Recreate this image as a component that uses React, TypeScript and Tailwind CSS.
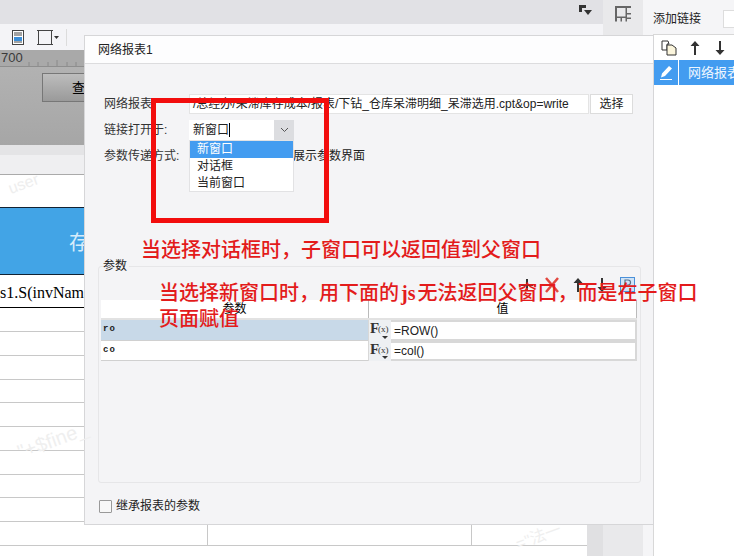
import React from "react";

const FONT = '"Liberation Sans","Noto Sans CJK SC",sans-serif';
const SERIF = '"Liberation Serif","Noto Sans CJK SC",serif';
const ANNOT = '"Liberation Serif","Noto Sans CJK SC",serif';

function Fx() {
  return (
    <div className="w-[23px] relative bg-[#eef0f3] border-l border-[#d8d8d8]" style={{ fontFamily: SERIF }}>
      <span className="absolute left-[1px] top-[0px] text-[15px] font-bold leading-[16px] text-[#333]">F</span>
      <span className="absolute left-[9px] top-[1px] text-[9px] leading-[16px] text-[#333]">(x)</span>
      <span className="absolute right-[3px] bottom-[2px] w-0 h-0 border-x-[3px] border-x-transparent border-t-[3px] border-t-[#333]" />
    </div>
  );
}

function ParamRow({ name, val, selected, h }: { name: string; val: string; selected?: boolean; h: string }) {
  return (
    <div className={`flex ${h}`}>
      <div
        className={`w-[267px] pl-[2px] flex items-center text-[9px] font-bold tracking-[1px] text-[#222] border-b border-[#d0d0d0] ${selected ? "bg-[#c8d9e8]" : "bg-white"}`}
        style={{ fontFamily: '"Liberation Mono",monospace' }}
      >
        {name}
      </div>
      <Fx />
      <div className="flex-1 bg-white border-2 border-[#d8d8d8] border-l-0 pl-[3px] flex items-center text-[12px] text-[#222]">{val}</div>
    </div>
  );
}

const lineYs = [24, 24, 24, 23, 24, 24, 24, 23, 24, 24];

export default function App() {
  return (
    <div className="relative w-[734px] h-[556px] overflow-hidden bg-white flex" style={{ fontFamily: FONT }}>
      {/* Left editor */}
      <div className="w-[603px] flex flex-col shrink-0">
        <div className="h-[24px] bg-[#e1e1e5] flex justify-end items-start pt-[5px] pr-[11px]">
          <svg width="13" height="11" viewBox="0 0 13 11">
            <path d="M0 0h7v3H3v4H0z" fill="#333" />
            <path d="M5 5h8l-4 5z" fill="#333" />
          </svg>
        </div>
        <div className="h-[26px] bg-[#f4f4f7] flex items-center pl-[12px]">
          <svg width="12" height="15" viewBox="0 0 12 15">
            <rect x="0.5" y="0.5" width="11" height="14" fill="#fff" stroke="#444" />
            <path d="M2 3h8M2 5h8M2 12h8" stroke="#444" />
            <rect x="2" y="7" width="8" height="4" fill="#3b8ed8" />
          </svg>
          <svg className="ml-[13px]" width="22" height="17" viewBox="0 0 22 17">
            <rect x="1.5" y="1.5" width="13" height="14" fill="#f4f4f7" stroke="#444" />
            <path d="M0 1.5h3M0 15.5h3M13 1.5h3M13 15.5h3" stroke="#444" />
            <path d="M17 7h5l-2.5 3z" fill="#333" />
          </svg>
          <span className="ml-[7px] w-px h-[17px] bg-[#dcdcdc]" />
        </div>
        <div className="h-[17px] bg-[#a9a9a9] border-b border-[#8e8e8e] text-[13px] text-[#3a3a3a] pl-[1px] leading-[15px] relative">
          700
          <svg className="absolute left-[28px] bottom-0" width="70" height="6" viewBox="0 0 70 6">
            <path d="M1 2v4M10 2v4M20 2v4M29 0v6M39 2v4M48 2v4M58 2v4M67 2v4" stroke="#8a8a8a" />
          </svg>
        </div>
        <div className="h-[78px] bg-gradient-to-b from-[#b2b2b2] to-[#a6a6a6] pl-[42px] pt-[6px]">
          <div className="w-[100px] h-[29px] border border-[#777] bg-gradient-to-b from-[#bdbdbd] to-[#9a9a9a] pl-[29px] text-[13px] leading-[27px] text-black">查</div>
        </div>
        <div className="h-[10px] bg-[#e4e4e6]" />
        <div className="h-[20px] bg-[#efeff1] border-b border-[#aaa]" />
        <div className="h-[32px] bg-white" />
        <div className="h-[68px] bg-[#42a4e6] border-y border-[#123] text-[#d6ecfb] text-[20px] pl-[69px] leading-[70px]">存</div>
        <div className="h-[33px] border-b border-black bg-white text-[16px] leading-[36px] overflow-hidden whitespace-nowrap" style={{ fontFamily: SERIF }}>
          s1.S(invNam
        </div>
        <div className="flex-1 flex">
          <div className="w-[587px] bg-white">
            {lineYs.map((h, i) => (
              <div key={i} style={{ height: h }} className="border-b border-[#c8c8c8] flex">
                <div className="w-[208px] h-full border-r border-[#c8c8c8]" />
                <div className="w-[264px] h-full border-r border-[#c8c8c8]" />
              </div>
            ))}
          </div>
          <div className="flex-1 bg-[#e0e0e2]" />
        </div>
      </div>

      {/* Tool strip */}
      <div className="w-[40px] bg-[#e9e9eb] flex flex-col items-center pt-[5px] shrink-0">
        <svg width="17" height="17" viewBox="0 0 17 17">
          <path d="M0 1h16v2H12v5h4v1.5H12v3h4V14H12v2.5H10.500V13H7v3.500H5.500V13H2v3.500H0zM2 3v8.500h8.500V3z" fill="#666" />
        </svg>
      </div>

      {/* Right panel */}
      <div className="flex-1 bg-[#f5f5f7] flex flex-col min-w-0">
        <div className="h-[34px] flex items-center pl-[10px] pt-[3px] text-[12px] text-[#222] whitespace-nowrap">
          添加链接
          <span className="ml-[22px] w-[20px] h-[18px] bg-white border border-[#ddd] shrink-0" />
        </div>
        <div className="flex-1 flex">
          <div className="w-[10px] shrink-0" />
          <div className="flex-1 min-w-0 bg-white border-l border-[#d8d8d8] border-t flex flex-col">
            <div className="h-[25px] flex items-center pl-[7px] bg-white">
              <svg width="16" height="16" viewBox="0 0 16 16">
                <path d="M1 1h6l1 3H6v6H1z" fill="#fff" stroke="#333" />
                <path d="M6 5h5l4 3v7H6z" fill="#fbf5dc" stroke="#333" />
              </svg>
              <svg className="ml-[13px]" width="10" height="14" viewBox="0 0 10 14"><path d="M5 0l4.500 5H6v9H4V5H.5z" fill="#333" /></svg>
              <svg className="ml-[15px]" width="10" height="14" viewBox="0 0 10 14"><path d="M5 14L.5 9H4V0h2v9h3.500z" fill="#333" /></svg>
            </div>
            <div className="h-[25px] bg-[#439cf0] flex items-center text-[13px] text-[#eef6ff] whitespace-nowrap overflow-hidden">
              <div className="w-[25px] h-full border-r border-white flex items-center justify-center shrink-0">
                <svg width="15" height="15" viewBox="0 0 15 15"><path d="M10 1l3 2.500-7 7.500-4 1.500 1-4zM1 14h12v1H1z" fill="#fff" /></svg>
              </div>
              <span className="ml-[9px]">网络报表</span>
            </div>
          </div>
        </div>
      </div>

      {/* Dialog */}
      <div className="absolute left-[84px] top-[35px] w-[570px] h-[490px] bg-[#f4f4f6] border border-[#d6d6d8] flex flex-col text-[12px] text-[#222]">
        <div className="h-[28px] bg-[#fdfdfe] border-b border-[#dcdcde] pl-[13px] flex items-center text-[12px]">网络报表1</div>
        <div className="flex-1 relative flex flex-col">
          <div className="h-[20px] mt-[30px] flex items-center pl-[19px]">
            <span className="w-[85px] text-[#333] shrink-0">网络报表:</span>
            <div className="w-[400px] h-[20px] bg-white border border-[#e4e4e4] flex items-center overflow-hidden whitespace-nowrap pl-[3px] text-[12px] shrink-0">
              /总经办/呆滞库存成本/报表/下钻_仓库呆滞明细_呆滞选用.cpt&amp;op=write
            </div>
            <div className="ml-[1px] w-[43px] h-[20px] bg-white border border-[#dcdcdc] flex items-center justify-center shrink-0">选择</div>
          </div>
          <div className="h-[20px] mt-[6px] flex items-center pl-[19px]">
            <span className="w-[85px] text-[#333]">链接打开于:</span>
            <div className="w-[105px] h-[20px] flex bg-white">
              <div className="flex-1 pl-[4px] flex items-center">新窗口<span className="w-px h-[14px] bg-black" /></div>
              <div className="w-[20px] bg-[#dcdde0] flex items-center justify-center">
                <svg width="9" height="6" viewBox="0 0 9 6"><path d="M1 1l3.500 3.500L8 1" fill="none" stroke="#555" /></svg>
              </div>
            </div>
          </div>
          <div className="h-[20px] mt-[6px] flex items-center pl-[19px]">
            <span className="w-[189px] text-[#333]">参数传递方式:</span>
            <span>展示参数界面</span>
          </div>

          {/* Params */}
          <div className="relative mt-[100px] ml-[13px] w-[543px] h-[217px] border border-[#e6e6e8] rounded-[3px] pl-[2px] pr-[3px] pt-[33px] flex flex-col">
            <span className="absolute left-[4px] top-[-9px] text-[12px] leading-[16px] bg-[#f4f4f6] pr-[2px]">参数</span>
            <div className="h-[20px] flex bg-white border-b-2 border-[#e2e2e2] text-[12px] text-black">
              <div className="w-[267px] flex items-center justify-center">参数</div>
              <div className="flex-1 border-x border-[#bbb] flex items-center justify-center">值</div>
            </div>
            <ParamRow name="ro" val="=ROW()" selected h="h-[21px]" />
            <ParamRow name="co" val="=col()" h="h-[20px]" />
            <svg className="absolute left-[421px] top-[10px]" width="116" height="16" viewBox="0 0 116 16">
              <path d="M7 2v12M1 8h12" stroke="#333" strokeWidth="2" />
              <path d="M26 1l12 14M38 1L26 15" stroke="#e2473f" strokeWidth="2.500" />
              <path d="M58 1l4.500 5H59v9h-2V6h-3.500z" fill="#333" />
              <path d="M82 15l4.500-5H83V1h-2v9h-3.500z" fill="#333" />
              <rect x="100.500" y="0.500" width="14" height="14" fill="#cfe3f6" stroke="#4a90d9" />
              <path d="M105 11V3h3a2.500 2.500 0 010 5h-3" fill="none" stroke="#5a7088" strokeWidth="1.200" />
            </svg>
          </div>

          <div className="mt-[14px] ml-[14px] flex items-center text-[12px] text-[#222]">
            <span className="w-[13px] h-[13px] border border-[#999] bg-[#f7f7f7] rounded-[1px]" />
            <span className="ml-[4px]">继承报表的参数</span>
          </div>

          {/* Dropdown */}
          <div className="absolute left-[104px] top-[76px] w-[105px] h-[52px] bg-white border border-[#e2e2e4] text-[12px] leading-[17px] z-10">
            <div className="h-[17px] bg-[#439cf0] text-white pl-[7px]">新窗口</div>
            <div className="h-[17px] pl-[7px]">对话框</div>
            <div className="h-[16px] pl-[7px]">当前窗口</div>
          </div>
        </div>
      </div>

      {/* Faint watermarks */}
      <span className="absolute left-[8px] top-[172px] text-[16px] text-[#eeeeee] -rotate-[20deg]">user</span>
      <span className="absolute left-[16px] top-[425px] text-[20px] text-[#efefef] -rotate-[20deg] whitespace-nowrap">"+$fine_</span>
      <span className="absolute left-[515px] top-[525px] text-[16px] text-[#efefef] -rotate-[20deg] whitespace-nowrap">="法一</span>

      {/* Annotation */}
      <div className="absolute left-[151px] top-[98px] w-[178px] h-[125px] border-[5px] border-[#f20d0d] z-20" />
      <div className="absolute left-[141px] top-[237px] text-[20px] leading-[26px] text-[#e31b1b] whitespace-nowrap z-20" style={{ fontFamily: ANNOT, fontWeight: 500 }}>
        {"当选择对话框时\uFF0C子窗口可以返回值到父窗口"}
      </div>
      <div className="absolute left-[159px] top-[280px] text-[20px] leading-[26px] text-[#e31b1b] whitespace-nowrap z-20" style={{ fontFamily: ANNOT, fontWeight: 500 }}>
        {"当选择新窗口时\uFF0C用下面的"}<span className="mx-[2px] font-bold">js</span>{"无法返回父窗口\uFF0C而是在子窗口"}
        <br />
        页面赋值
      </div>
    </div>
  );
}
